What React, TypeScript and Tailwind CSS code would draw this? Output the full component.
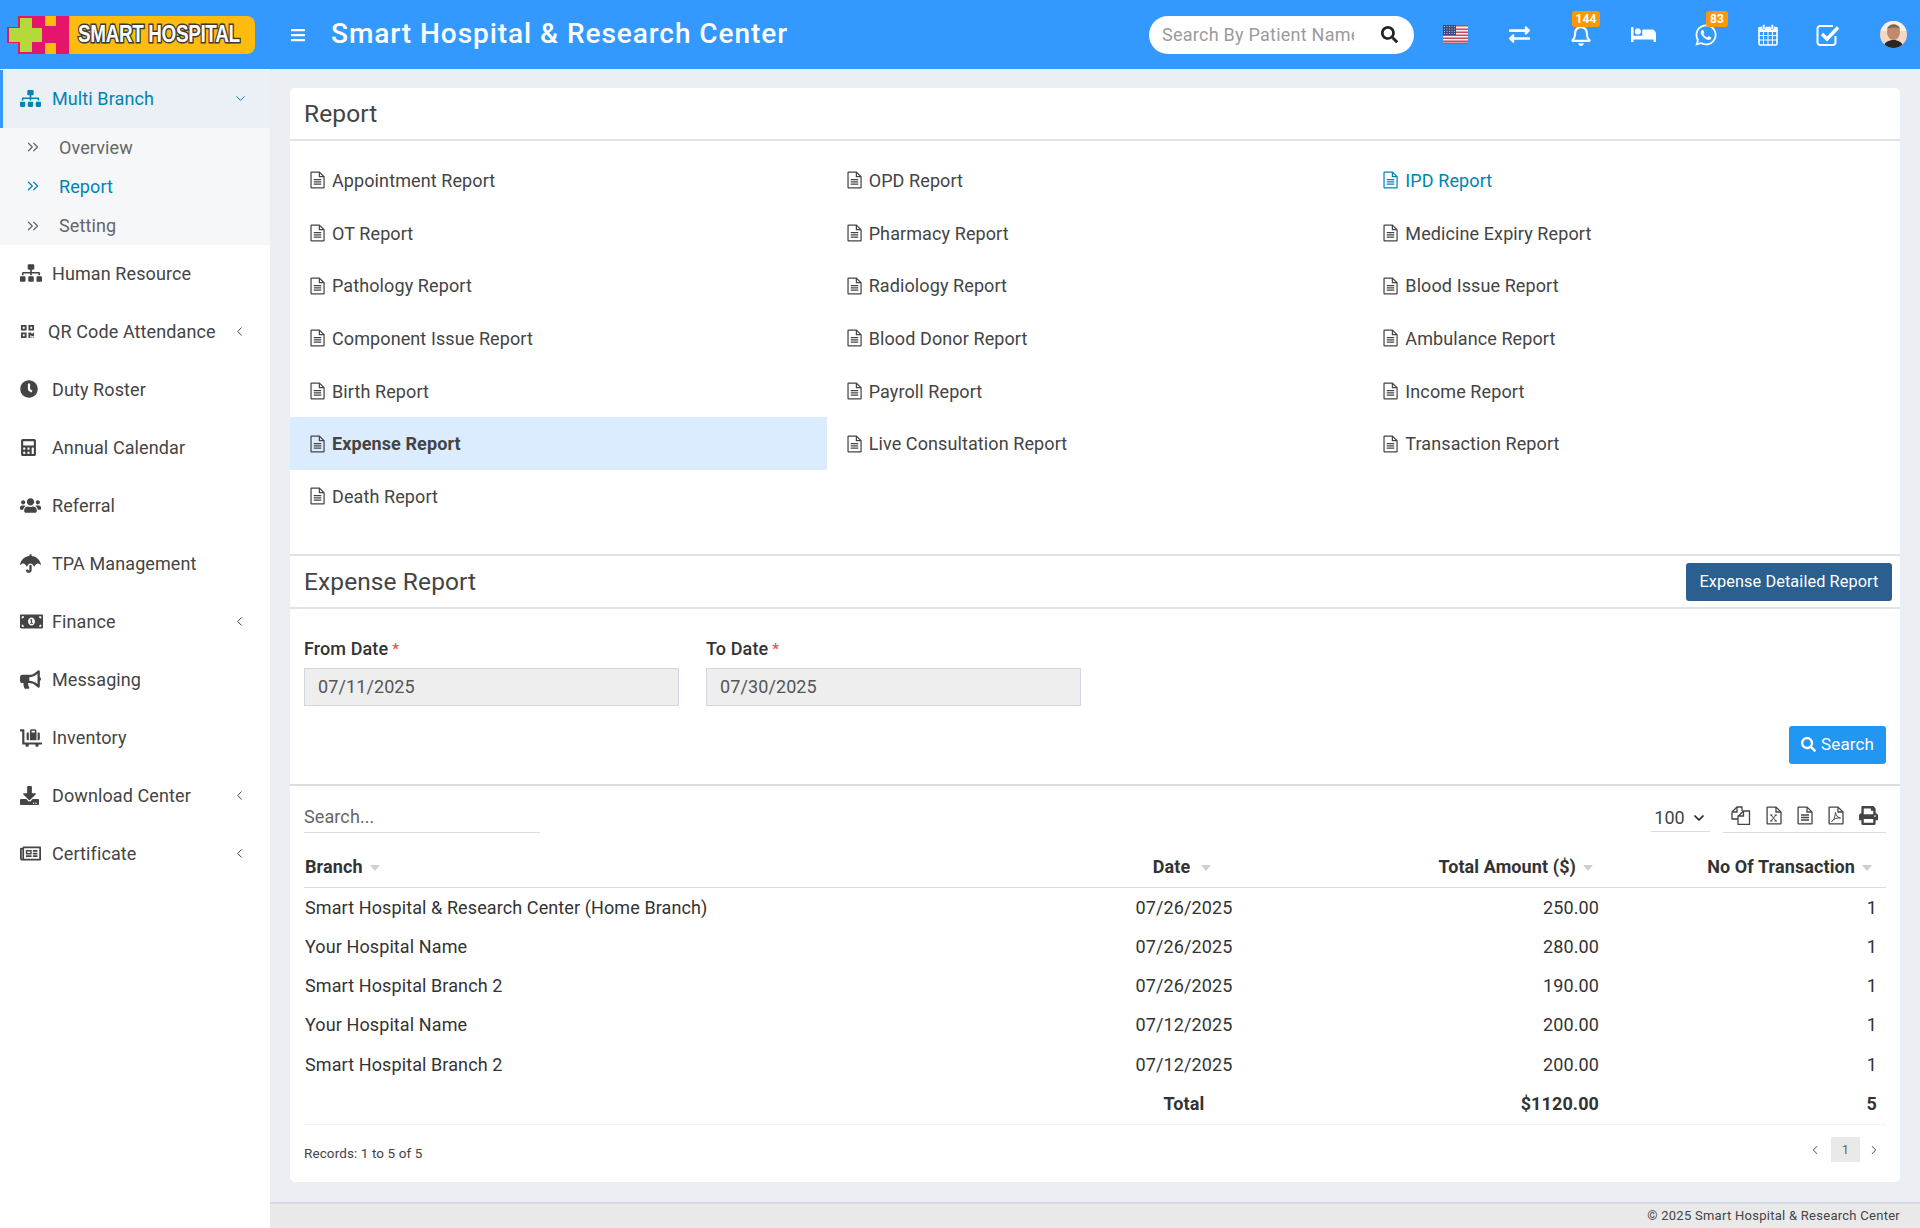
import type { ReactNode } from "react";
import { ChevronDown, ChevronLeft, ChevronRight, ChevronsRight } from "lucide-react";
import {
  FaBars,
  FaBed,
  FaBullhorn,
  FaCalculator,
  FaClock,
  FaDownload,
  FaExchangeAlt,
  FaLuggageCart,
  FaMoneyBillAlt,
  FaPrint,
  FaQrcode,
  FaRegBell,
  FaRegNewspaper,
  FaSearch,
  FaSitemap,
  FaUmbrella,
  FaUsers,
  FaWhatsapp,
} from "react-icons/fa";

const sideItems = [
  { label: "Human Resource", icon: FaSitemap, size: "text-[22px]" },
  { label: "QR Code Attendance", icon: FaQrcode, size: "text-[15px]", narrow: true, arrow: true },
  { label: "Duty Roster", icon: FaClock, size: "text-[18px]" },
  { label: "Annual Calendar", icon: FaCalculator, size: "text-[17px]" },
  { label: "Referral", icon: FaUsers, size: "text-[21px]" },
  { label: "TPA Management", icon: FaUmbrella, size: "text-[21px]" },
  { label: "Finance", icon: FaMoneyBillAlt, size: "text-[23px]", arrow: true },
  { label: "Messaging", icon: FaBullhorn, size: "text-[21px]" },
  { label: "Inventory", icon: FaLuggageCart, size: "text-[22px]" },
  { label: "Download Center", icon: FaDownload, size: "text-[19px]", arrow: true },
  { label: "Certificate", icon: FaRegNewspaper, size: "text-[21px]", arrow: true },
];

const reports = [
  "Appointment Report", "OPD Report", "IPD Report",
  "OT Report", "Pharmacy Report", "Medicine Expiry Report",
  "Pathology Report", "Radiology Report", "Blood Issue Report",
  "Component Issue Report", "Blood Donor Report", "Ambulance Report",
  "Birth Report", "Payroll Report", "Income Report",
  "Expense Report", "Live Consultation Report", "Transaction Report",
  "Death Report",
];

const rows = [
  ["Smart Hospital & Research Center (Home Branch)", "07/26/2025", "250.00"],
  ["Your Hospital Name", "07/26/2025", "280.00"],
  ["Smart Hospital Branch 2", "07/26/2025", "190.00"],
  ["Your Hospital Name", "07/12/2025", "200.00"],
  ["Smart Hospital Branch 2", "07/12/2025", "200.00"],
];

function Logo() {
  return (
    <div className="ml-[7px] flex h-[38px] w-[248px] items-center">
      <svg viewBox="0 0 62 38" className="h-[38px] w-[62px] shrink-0">
        <rect x="11" y="0" width="51" height="38" fill="#e5156b" />
        <rect x="0" y="11" width="14" height="16" fill="#e5156b" />
        <rect x="38" y="0" width="11" height="10" fill="#ffbc0f" />
        <rect x="38" y="27" width="11" height="11" fill="#ffbc0f" />
        <path d="M13 2h12v10h10v14H25v10H13V26H2V12h11z" fill="#b5d93a" />
      </svg>
      <div className="flex h-[38px] w-[186px] shrink-0 items-center rounded-r-lg bg-[#ffbc0f] pl-[9px]">
        <span className="origin-left scale-x-[0.82] [font-family:'Liberation_Sans',sans-serif] text-[23px] leading-none font-bold tracking-[-0.4px] whitespace-nowrap text-white [-webkit-text-stroke:3px_#3a3a3a] [paint-order:stroke_fill]">
          SMART HOSPITAL
        </span>
      </div>
    </div>
  );
}

function Flag() {
  return (
    <svg viewBox="0 0 25 19" className="h-[19px] w-[25px]">
      <rect width="25" height="19" fill="#f4f4f4" />
      {[0, 3, 6, 9, 12, 15].map((y) => (
        <rect key={y} y={y + (y > 0 ? 0.5 : 0)} width="25" height="1.5" fill="#c9485b" />
      ))}
      <rect y="17.5" width="25" height="1.5" fill="#c9485b" />
      <rect width="13" height="10" fill="#3c4a78" />
      {[1.5, 4, 6.5, 9, 11.5].map((x) =>
        [1.5, 4, 6.5, 8.5].map((y) => <circle key={`${x}-${y}`} cx={x} cy={y} r="0.5" fill="#dfe3ef" />),
      )}
    </svg>
  );
}

function CalendarIcon() {
  return (
    <svg viewBox="0 0 20 22" className="h-[22px] w-[20px]" fill="none" stroke="white">
      <rect x="1" y="3.5" width="18" height="17.5" rx="1.5" strokeWidth="1.6" />
      <rect x="1" y="3.5" width="18" height="4" fill="white" />
      <rect x="4.5" y="0.5" width="2.5" height="5" rx="1" fill="white" strokeWidth="0.6" stroke="#3399ff" />
      <rect x="13" y="0.5" width="2.5" height="5" rx="1" fill="white" strokeWidth="0.6" stroke="#3399ff" />
      <path d="M1 11.5h18M1 16h18M5.500 8v13M10 8v13M14.500 8v13" strokeWidth="1" />
    </svg>
  );
}

function CheckIcon() {
  return (
    <svg viewBox="0 0 24 22" className="h-[22px] w-[24px]" fill="none" stroke="white">
      <path d="M17 2H4a2.500 2.500 0 0 0-2.500 2.500v14A2.500 2.500 0 0 0 4 21h13a2.500 2.500 0 0 0 2.500-2.500V12" strokeWidth="2" />
      <path d="M6 10l5 5L22 3.500" strokeWidth="3.400" />
    </svg>
  );
}

function Avatar() {
  return (
    <svg viewBox="0 0 27 27" className="h-[27px] w-[27px] rounded-full">
      <rect width="27" height="27" fill="#f3d6c4" />
      <rect width="27" height="10" fill="#fdeee4" />
      <ellipse cx="13.5" cy="11" rx="6.5" ry="8" fill="#c08a68" />
      <path d="M7 8c1-5 12-6 13 0-3-2-9-2-13 0z" fill="#6f6a5e" />
      <path d="M3 27c1-6 6-8 10.500-8s9 2 10.500 8z" fill="#2b2724" />
    </svg>
  );
}

// fa-file-o outline, the inside is passed as children
function FileOutline({ children, className }: { children?: ReactNode; className?: string }) {
  return (
    <svg viewBox="0 0 16 18" className={className} fill="none" stroke="currentColor" strokeWidth="1.3">
      <path d="M1.100 1.100a.5.5 0 0 1 .5-.5H10L15 5.500v11.400a.5.5 0 0 1-.5.5H1.600a.5.5 0 0 1-.5-.5z" />
      <path d="M10 .6v4.900h5" />
      {children}
    </svg>
  );
}

function TextLines() {
  return <path d="M4 8.500h8M4 11h8M4 13.500h8" />;
}

function CopyIcon() {
  return (
    <svg viewBox="0 0 20 19" className="h-[19px] w-[20px]" fill="none" stroke="currentColor" strokeWidth="1.3">
      <path d="M7 13H1V6l5-5h5v4" />
      <path d="M6 1v5H1" />
      <path d="M7.500 10l5-5h6v13.400h-11.500V10h5.500V5" />
    </svg>
  );
}

function Badge({ children, className }: { children: string; className: string }) {
  return (
    <span className={`absolute top-[11px] flex h-[16px] items-center justify-center rounded-[3px] bg-[#ff9800] text-[12px] font-bold text-white ${className}`}>
      {children}
    </span>
  );
}

function Header() {
  return (
    <header className="relative flex h-[69px] items-center bg-[#3399ff]">
      <div className="w-[270px] shrink-0">
        <Logo />
      </div>
      <FaBars className="ml-[20px] text-[16px] text-white" />
      <h1 className="ml-[25px] pb-[2px] text-[28px] font-medium tracking-[0.95px] whitespace-nowrap text-white">
        Smart Hospital &amp; Research Center
      </h1>
      <div className="ml-auto flex h-[38px] w-[265px] items-center rounded-full bg-white pl-[13px] pr-[16px]">
        <input
          placeholder="Search By Patient Name"
          className="w-[192px] bg-transparent text-[18px] tracking-[0.25px] outline-none placeholder:text-[#9b9b9b]"
        />
        <FaSearch className="ml-auto text-[17px] text-[#222]" />
      </div>
      <div className="flex w-[506px] items-center text-white">
        <div className="flex w-[73px] justify-center pl-[9px]"><Flag /></div>
        <div className="flex w-[64px] justify-center"><FaExchangeAlt className="text-[21px]" /></div>
        <div className="flex w-[60px] justify-center"><FaRegBell className="text-[22px]" /></div>
        <div className="flex w-[64px] justify-center"><FaBed className="text-[25px]" /></div>
        <div className="flex w-[62px] justify-center"><FaWhatsapp className="text-[24px]" /></div>
        <div className="flex w-[61px] justify-center"><CalendarIcon /></div>
        <div className="flex w-[60px] justify-center"><CheckIcon /></div>
        <div className="flex w-[62px] justify-center pl-[8px]"><Avatar /></div>
      </div>
      <Badge className="left-[1572px] w-[28px]">144</Badge>
      <Badge className="left-[1706px] w-[22px]">83</Badge>
    </header>
  );
}

function Sidebar() {
  return (
    <aside className="flex w-[270px] shrink-0 flex-col bg-white text-[18px] text-[#444]">
      <div className="mt-px flex h-[58px] items-center border-l-[3px] border-[#3399ff] bg-[#ebeff6] pb-[2px] pl-[17px] text-[#0084b4]">
        <FaSitemap className="w-[21px] text-[19px]" />
        <span className="ml-[11px]">Multi Branch</span>
        <ChevronDown className="absolute left-[233px] h-[15px] w-[15px]" strokeWidth={1.6} />
      </div>
      <div className="flex h-[117px] flex-col bg-[#f5f7f9] pl-[24px] text-[#666]">
        <div className="flex h-[38px] items-center gap-[17px]"><ChevronsRight className="h-[18px] w-[18px]" strokeWidth={1.6} />Overview</div>
        <div className="flex h-[40px] items-center gap-[17px] text-[#0084b4]"><ChevronsRight className="h-[18px] w-[18px]" strokeWidth={1.6} />Report</div>
        <div className="flex h-[39px] items-center gap-[17px]"><ChevronsRight className="h-[18px] w-[18px]" strokeWidth={1.6} />Setting</div>
      </div>
      <nav>
        {sideItems.map((item) => (
          <div key={item.label} className="flex h-[58.100px] items-center pb-[2px] pl-[20px]">
            <div className={item.narrow ? "w-[28px]" : "w-[32px]"}>
              <item.icon className={item.size} />
            </div>
            <span>{item.label}</span>
            {item.arrow && <ChevronLeft className="absolute left-[232px] h-[15px] w-[15px]" strokeWidth={1.6} />}
          </div>
        ))}
      </nav>
    </aside>
  );
}

function ReportList() {
  return (
    <div className="grid grid-cols-3 pt-[13px] pb-[31px] text-[18px] text-[#444]">
      {reports.map((name) => (
        <div
          key={name}
          className={`flex h-[52.700px] items-center pl-[20px] ${name === "Expense Report" ? "bg-[#dbecff] font-bold" : ""} ${name === "IPD Report" ? "text-[#0084b4]" : ""}`}
        >
          <FileOutline className="mr-[7px] h-[18px] w-[15px] shrink-0">
            <TextLines />
          </FileOutline>
          {name}
        </div>
      ))}
    </div>
  );
}

function SortArrow({ className = "ml-[7px]" }: { className?: string }) {
  return <span className={`inline-block border-x-[5.500px] border-t-[6px] border-x-transparent border-t-[#cfcfcf] align-middle ${className}`} />;
}

function DateField({ label, value }: { label: string; value: string }) {
  return (
    <div className="w-[375px]">
      <div className="flex h-[24px] items-center text-[18px] font-medium text-[#333]">
        {label}
        <span className="ml-[4px] text-[15px] text-[#f44]">*</span>
      </div>
      <div className="mt-[7px] flex h-[38px] items-center border border-[#d2d6de] bg-[#eee] pl-[13px] text-[18px] text-[#555]">{value}</div>
    </div>
  );
}

function ReportTable() {
  return (
    <div className="px-[14px]">
      <div className="flex h-[47px] items-start justify-between pt-[19px]">
        <div className="h-[28px] w-[236px] border-b border-[#ddd] text-[18px] leading-[24px] text-[#666]">Search...</div>
        <div className="flex items-start">
          <div className="flex h-[27px] w-[59px] items-center justify-center gap-[6px] border-b border-[#ddd] text-[18px] text-[#444]">
            100
            <ChevronDown className="h-[16px] w-[16px] text-[#222]" strokeWidth={2.6} />
          </div>
          <div className="ml-[13px] flex h-[28px] w-[163px] items-start justify-between border-b border-[#ddd] pt-[1px] pr-[8px] pl-[8px] text-[#444]">
            <CopyIcon />
            <FileOutline className="h-[19px] w-[16px]">
              <path d="M5 8.500l5 6M10 8.500l-5 6M4 8.500h2.500M8.500 8.500H11M4 14.500h2.500M8.500 14.500H11" strokeWidth="1" />
            </FileOutline>
            <FileOutline className="h-[19px] w-[16px]">
              <TextLines />
            </FileOutline>
            <FileOutline className="h-[19px] w-[16px]">
              <path d="M3.500 15c2-1 3.500-4 4-9 .500 3 2 5 5 5.500-3-.500-6.500.5-9 3.500z" strokeWidth="1" />
            </FileOutline>
            <FaPrint className="text-[19px]" />
          </div>
        </div>
      </div>
      <table className="mt-[14px] w-full table-fixed border-collapse text-[18px] text-[#333]">
        <colgroup>
          <col className="w-[786px]" />
          <col className="w-[188px]" />
          <col className="w-[330px]" />
          <col className="w-[278px]" />
        </colgroup>
        <thead>
          <tr className="h-[41px] border-b border-[#ddd]">
            <th className="pb-[2px] pl-px text-left font-bold">Branch<SortArrow /></th>
            <th className="pr-[4px] pb-[2px] text-center font-bold">Date<SortArrow className="ml-[11px]" /></th>
            <th className="pr-[15px] pb-[2px] text-right font-bold">Total Amount ($)<SortArrow /></th>
            <th className="pr-[14px] pb-[2px] text-right font-bold">No Of Transaction<SortArrow /></th>
          </tr>
        </thead>
        <tbody>
          {rows.map((row, index) => (
            <tr key={index} className="h-[39.200px]">
              <td className="pl-px">{row[0]}</td>
              <td className="text-center">{row[1]}</td>
              <td className="pr-[9px] text-right">{row[2]}</td>
              <td className="pr-[9px] text-right">1</td>
            </tr>
          ))}
          <tr className="h-[41px] border-b border-[#f1f1f1] font-bold">
            <td className="pb-[2px]" />
            <td className="pb-[2px] text-center">Total</td>
            <td className="pr-[9px] pb-[2px] text-right">$1120.00</td>
            <td className="pr-[9px] pb-[2px] text-right">5</td>
          </tr>
        </tbody>
      </table>
      <div className="mt-[12px] flex h-[25px] items-center justify-between">
        <span className="pt-[6px] text-[13.500px] text-[#444]">Records: 1 to 5 of 5</span>
        <div className="flex items-center text-[#666]">
          <ChevronLeft className="mr-[9px] h-[14px] w-[14px]" strokeWidth={1.8} />
          <span className="flex h-[25px] w-[29px] items-center justify-center bg-[#e9e9e9] text-[13px]">1</span>
          <ChevronRight className="mr-[5px] ml-[7px] h-[14px] w-[14px]" strokeWidth={1.8} />
        </div>
      </div>
    </div>
  );
}

function MainCard() {
  return (
    <section className="rounded-[5px] bg-white">
      <div className="flex h-[53px] items-center border-b-2 border-[#dfe4ea] pt-[2px] pl-[14px] text-[24.500px] text-[#444]">Report</div>
      <ReportList />
      <div className="flex h-[55px] items-center justify-between border-y-2 border-[#dfe4ea] pr-[8px] pl-[14px] text-[24.500px] text-[#444]">
        <span className="pt-[3px]">Expense Report</span>
        <div className="mt-[2px] flex h-[38px] w-[206px] items-center justify-center rounded-[3px] bg-[#2a5f8f] text-[16.300px] text-white">Expense Detailed Report</div>
      </div>
      <div className="flex h-[177px] flex-col border-b-2 border-[#ddd] px-[14px] pt-[28px]">
        <div className="flex gap-[27px]">
          <DateField label="From Date" value="07/11/2025" />
          <DateField label="To Date" value="07/30/2025" />
        </div>
        <div className="mt-[20px] ml-auto flex h-[38px] w-[97px] items-center justify-center gap-[5px] rounded-[3px] bg-[#2196f3] text-[17px] text-white">
          <FaSearch className="text-[15px]" />
          Search
        </div>
      </div>
      <ReportTable />
      <div className="h-[20px]" />
    </section>
  );
}

export default function App() {
  return (
    <div className="flex h-[1228px] flex-col overflow-hidden bg-[#ebeef3] tracking-[0.1px] [font-family:Roboto,sans-serif]">
      <Header />
      <div className="relative flex flex-1">
        <Sidebar />
        <div className="flex flex-1 flex-col">
          <main className="flex-1 pt-[19px] pr-[20px] pl-[20px]">
            <MainCard />
          </main>
          <footer className="flex h-[26px] items-center justify-end border-t-2 border-[#d5d9e2] bg-[#e9e9e9] pr-[20px] text-[13px] tracking-[0.27px] text-[#444]">
            © 2025 Smart Hospital &amp; Research Center
          </footer>
        </div>
      </div>
    </div>
  );
}
